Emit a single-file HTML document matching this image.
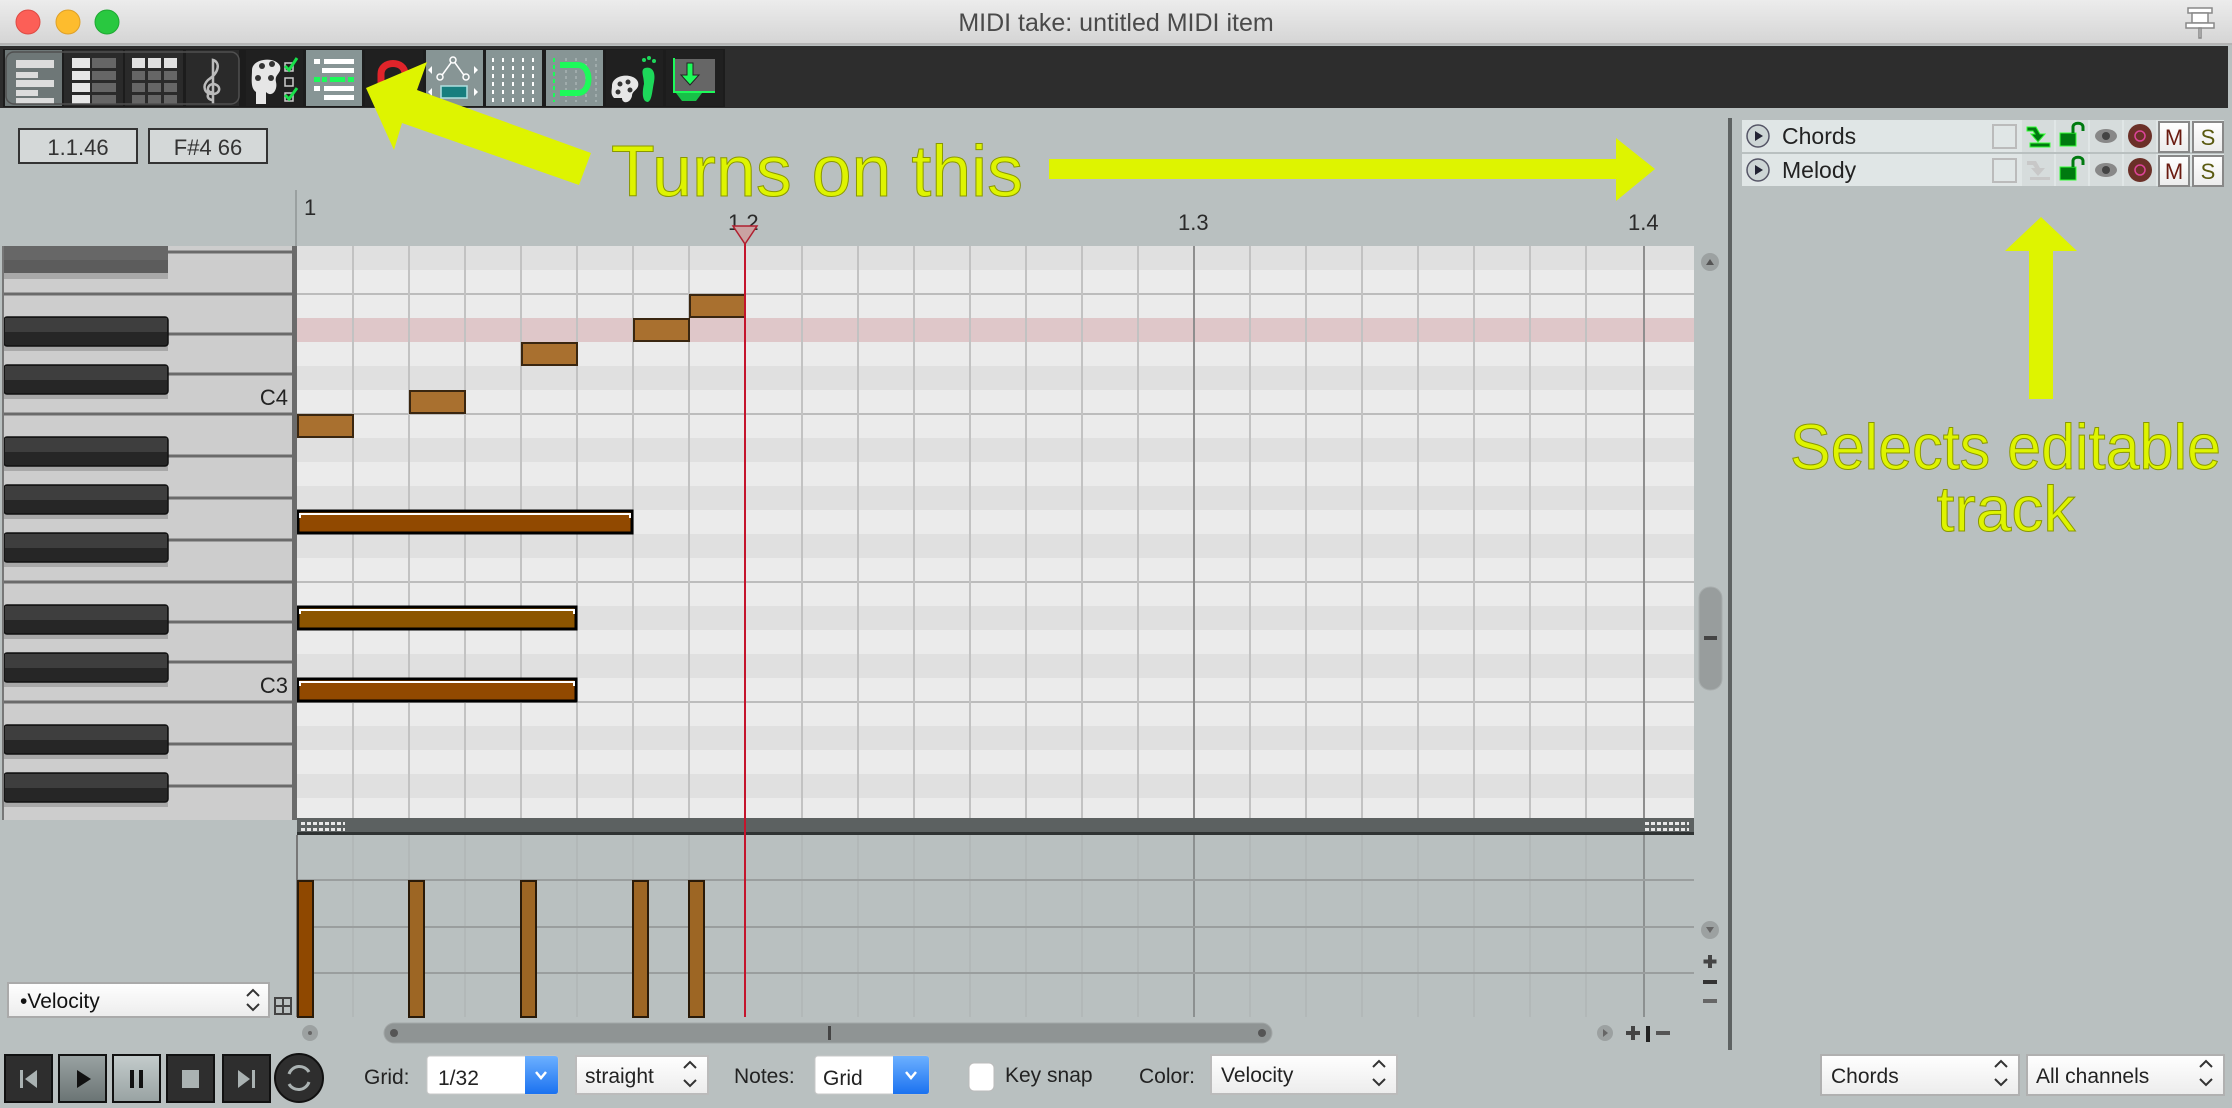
<!DOCTYPE html>
<html><head><meta charset="utf-8"><style>
html,body{margin:0;padding:0;background:#b9c0c0;}
svg{display:block;font-family:"Liberation Sans",Arial,sans-serif;}
</style></head><body>
<svg width="2232" height="1108" viewBox="0 0 2232 1108" xmlns="http://www.w3.org/2000/svg">
<defs>
<linearGradient id="tb" x1="0" y1="0" x2="0" y2="1"><stop offset="0" stop-color="#ececec"/><stop offset="1" stop-color="#d4d4d4"/></linearGradient>
<linearGradient id="sel" x1="0" y1="0" x2="0" y2="1"><stop offset="0" stop-color="#ffffff"/><stop offset="1" stop-color="#ececec"/></linearGradient>
<linearGradient id="blu" x1="0" y1="0" x2="0" y2="1"><stop offset="0" stop-color="#6cb0ff"/><stop offset="1" stop-color="#1b72f0"/></linearGradient>
<linearGradient id="play" x1="0" y1="0" x2="0" y2="1"><stop offset="0" stop-color="#9aa3a3"/><stop offset="1" stop-color="#6a7474"/></linearGradient>
<linearGradient id="paus" x1="0" y1="0" x2="0" y2="1"><stop offset="0" stop-color="#c4cccc"/><stop offset="1" stop-color="#98a2a2"/></linearGradient>
</defs>
<rect width="2232" height="1108" fill="#b9c0c0"/>
<!-- title bar -->
<rect x="0" y="0" width="2232" height="45" fill="url(#tb)"/>
<rect x="0" y="43" width="2232" height="2" fill="#b4b4b4"/>
<circle cx="28" cy="22" r="12" fill="#fc5f57" stroke="#de4a43" stroke-width="1"/>
<circle cx="68" cy="22" r="12" fill="#fdbc2e" stroke="#dea028" stroke-width="1"/>
<circle cx="107" cy="22" r="12" fill="#29c840" stroke="#1ea832" stroke-width="1"/>
<text x="1116" y="31" font-size="25" fill="#4a4a4a" text-anchor="middle">MIDI take: untitled MIDI item</text>
<g fill="#fff" stroke="#888" stroke-width="1.5">
<rect x="2188" y="8" width="24" height="5"/><rect x="2192" y="13" width="16" height="10"/><rect x="2186" y="23" width="28" height="5"/><rect x="2199" y="28" width="2" height="10"/></g>
<!-- toolbar -->
<rect x="0" y="46" width="2228" height="62" fill="#2d2d2d"/>
<rect x="3" y="49" width="722" height="58" fill="#1c1c1c"/>
<!-- b1 -->
<rect x="5" y="50" width="57" height="56" fill="#6e7777"/>
<g fill="#dcdcdc"><rect x="16" y="60" width="38" height="8"/><rect x="16" y="72" width="22" height="6"/><rect x="16" y="80" width="38" height="7"/><rect x="16" y="90" width="22" height="6"/><rect x="16" y="98" width="38" height="6"/></g>
<!-- b2 -->
<rect x="64" y="50" width="59" height="56" fill="#2a2a2a"/>
<g fill="#e6e6e6"><rect x="72" y="58" width="18" height="10"/><rect x="72" y="71" width="18" height="9"/><rect x="72" y="83" width="18" height="9"/><rect x="72" y="95" width="18" height="9"/></g>
<g fill="#666"><rect x="92" y="58" width="24" height="10"/><rect x="92" y="71" width="24" height="9"/><rect x="92" y="83" width="24" height="9"/><rect x="92" y="95" width="24" height="9"/></g>
<!-- b3 -->
<rect x="125" y="50" width="58" height="56" fill="#2a2a2a"/>
<g fill="#e0e0e0"><rect x="132" y="58" width="13" height="10"/><rect x="148" y="58" width="13" height="10"/><rect x="164" y="58" width="13" height="10"/></g>
<g fill="#666"><rect x="132" y="71" width="13" height="9"/><rect x="148" y="71" width="13" height="9"/><rect x="164" y="71" width="13" height="9"/><rect x="132" y="83" width="13" height="9"/><rect x="148" y="83" width="13" height="9"/><rect x="164" y="83" width="13" height="9"/><rect x="132" y="95" width="13" height="9"/><rect x="148" y="95" width="13" height="9"/><rect x="164" y="95" width="13" height="9"/></g>
<!-- b4 clef -->
<rect x="186" y="50" width="53" height="56" fill="#2a2a2a"/>
<path d="M213 100 C206 100 206 92 213 92 M213 104 L213 60 C220 62 220 72 208 80 C202 86 204 94 213 94 C220 94 222 86 214 84 C208 84 206 90 210 92" fill="none" stroke="#bbb" stroke-width="2.5"/>
<rect x="6" y="52" width="233" height="52" rx="8" fill="none" stroke="#505050" stroke-width="1.5"/>
<!-- b5 palette -->
<rect x="246" y="50" width="57" height="56" fill="#202020"/>
<path d="M252 70 C252 58 276 56 280 66 C282 74 274 74 276 82 C278 90 272 98 266 92 L266 104 L256 104 L256 92 C250 88 252 78 252 70Z" fill="#e6e6e6"/>
<circle cx="262" cy="66" r="3" fill="#333"/><circle cx="272" cy="64" r="3" fill="#333"/><circle cx="258" cy="78" r="3" fill="#333"/><circle cx="271" cy="78" r="3" fill="#333"/>
<rect x="285" y="63" width="8" height="8" fill="none" stroke="#ccc" stroke-width="1.5"/><rect x="285" y="78" width="8" height="8" fill="none" stroke="#ccc" stroke-width="1.5"/><rect x="285" y="93" width="8" height="8" fill="none" stroke="#ccc" stroke-width="1.5"/>
<path d="M285 66 L289 70 L297 58 M285 95 L289 99 L297 88" fill="none" stroke="#18e04a" stroke-width="3"/>
<!-- b6 active -->
<rect x="306" y="50" width="56" height="56" fill="#879595"/>
<g fill="#fff"><rect x="314" y="59" width="6" height="5"/><rect x="324" y="59" width="30" height="5"/><rect x="322" y="68" width="32" height="5"/><rect x="314" y="86" width="6" height="5"/><rect x="324" y="86" width="30" height="5"/><rect x="324" y="95" width="30" height="5"/></g>
<g fill="#1dfa5a"><rect x="314" y="77" width="6" height="5"/><rect x="322" y="77" width="5" height="5"/><rect x="330" y="77" width="15" height="5"/><rect x="348" y="77" width="6" height="5"/></g>
<!-- b7 magnet red -->
<rect x="365" y="50" width="58" height="56" fill="#202020"/>
<path d="M381 92 L381 74 C381 60 405 60 405 74 L405 92" fill="none" stroke="#e0242a" stroke-width="7"/>
<!-- b8 -->
<rect x="426" y="50" width="57" height="56" fill="#879595"/>
<path d="M440 78 L453 60 L466 78" fill="none" stroke="#fff" stroke-width="1.5"/>
<circle cx="440" cy="77" r="3" fill="#879595" stroke="#fff" stroke-width="1.5"/><circle cx="453" cy="60" r="3" fill="#879595" stroke="#fff" stroke-width="1.5"/><circle cx="466" cy="77" r="3" fill="#879595" stroke="#fff" stroke-width="1.5"/>
<rect x="441" y="86" width="26" height="12" fill="#177e7e" stroke="#b0e0e0" stroke-width="1.5"/>
<path d="M432 66 L428 70 L432 74Z M474 66 L478 70 L474 74Z M432 88 L428 92 L432 96Z M474 88 L478 92 L474 96Z" fill="#fff"/>
<!-- b9 -->
<rect x="486" y="50" width="56" height="56" fill="#879595"/>
<g stroke="#fff" stroke-width="2" stroke-dasharray="4 4"><line x1="493" y1="58" x2="493" y2="102"/><line x1="503" y1="58" x2="503" y2="102"/><line x1="513" y1="58" x2="513" y2="102"/><line x1="523" y1="58" x2="523" y2="102"/><line x1="533" y1="58" x2="533" y2="102"/></g>
<!-- b10 -->
<rect x="546" y="50" width="57" height="56" fill="#879595"/>
<g stroke="#a8b4b4" stroke-width="1.5" stroke-dasharray="3 3"><line x1="566" y1="58" x2="566" y2="102"/><line x1="576" y1="58" x2="576" y2="102"/><line x1="586" y1="58" x2="586" y2="102"/><line x1="596" y1="58" x2="596" y2="102"/></g>
<line x1="554" y1="58" x2="554" y2="102" stroke="#1dfa5a" stroke-width="2" stroke-dasharray="4 3"/>
<path d="M560 65 L578 65 C592 65 592 93 578 93 L560 93" fill="none" stroke="#1dfa5a" stroke-width="6"/>
<!-- b11 -->
<rect x="606" y="50" width="57" height="56" fill="#202020"/>
<path d="M612 86 C612 74 634 72 638 82 C640 90 632 90 632 96 C630 104 622 104 622 98 L614 98 C610 94 612 90 612 86Z" fill="#e6e6e6"/>
<circle cx="620" cy="84" r="2.5" fill="#333"/><circle cx="628" cy="82" r="2.5" fill="#333"/><circle cx="618" cy="92" r="2.5" fill="#333"/><circle cx="630" cy="90" r="2.5" fill="#333"/>
<path d="M645 68 C652 66 656 72 654 82 C652 92 652 100 648 102 C642 102 642 92 644 84 C644 76 640 70 645 68Z" fill="#1dd85a"/>
<circle cx="644" cy="60" r="2" fill="#1dd85a"/><circle cx="649" cy="58" r="2" fill="#1dd85a"/><circle cx="654" cy="61" r="2" fill="#1dd85a"/>
<!-- b12 -->
<rect x="666" y="50" width="57" height="56" fill="#202020"/>
<rect x="675" y="59" width="40" height="32" fill="#666"/>
<path d="M674 58 L674 92 L715 92" fill="none" stroke="#1dfa5a" stroke-width="2"/>
<path d="M687 63 L693 63 L693 75 L699 75 L690 85 L681 75 L687 75Z" fill="#1dfa5a" stroke="#222" stroke-width="1"/>
<path d="M676 93 L702 93 L696 101 L682 101Z" fill="#18c048"/>
<!-- position boxes -->
<rect x="19" y="129" width="118" height="34" fill="#d4d8d8" stroke="#333" stroke-width="2"/>
<text x="78" y="155" font-size="22" fill="#333" text-anchor="middle">1.1.46</text>
<rect x="149" y="129" width="118" height="34" fill="#d4d8d8" stroke="#333" stroke-width="2"/>
<text x="208" y="155" font-size="22" fill="#333" text-anchor="middle">F#4  66</text>
<!-- ruler -->
<line x1="296" y1="190" x2="296" y2="246" stroke="#9aa0a0" stroke-width="2"/>
<g font-size="22" fill="#2a2a2a">
<text x="304" y="215">1</text><text x="728" y="230">1.2</text><text x="1178" y="230">1.3</text><text x="1628" y="230">1.4</text></g>
<!-- grid -->
<rect x="297" y="246" width="1397" height="572" fill="#ebebeb"/>
<g fill="#e0e0e0">
<rect x="297" y="246" width="1397" height="24"/><rect x="297" y="318" width="1397" height="24"/><rect x="297" y="366" width="1397" height="24"/><rect x="297" y="438" width="1397" height="24"/><rect x="297" y="486" width="1397" height="24"/><rect x="297" y="534" width="1397" height="24"/><rect x="297" y="606" width="1397" height="24"/><rect x="297" y="654" width="1397" height="24"/><rect x="297" y="726" width="1397" height="24"/><rect x="297" y="774" width="1397" height="24"/></g>
<rect x="297" y="318" width="1397" height="24" fill="#dfc7c9"/>
<g stroke="#bcbcbc" stroke-width="2"><line x1="297" y1="294" x2="1694" y2="294"/><line x1="297" y1="414" x2="1694" y2="414"/><line x1="297" y1="582" x2="1694" y2="582"/><line x1="297" y1="702" x2="1694" y2="702"/></g>
<g stroke="#c2c2c2" stroke-width="2">
<line x1="353" y1="246" x2="353" y2="818"/><line x1="409" y1="246" x2="409" y2="818"/><line x1="465" y1="246" x2="465" y2="818"/><line x1="521" y1="246" x2="521" y2="818"/><line x1="577" y1="246" x2="577" y2="818"/><line x1="633" y1="246" x2="633" y2="818"/><line x1="689" y1="246" x2="689" y2="818"/><line x1="802" y1="246" x2="802" y2="818"/><line x1="858" y1="246" x2="858" y2="818"/><line x1="914" y1="246" x2="914" y2="818"/><line x1="970" y1="246" x2="970" y2="818"/><line x1="1026" y1="246" x2="1026" y2="818"/><line x1="1082" y1="246" x2="1082" y2="818"/><line x1="1138" y1="246" x2="1138" y2="818"/><line x1="1250" y1="246" x2="1250" y2="818"/><line x1="1306" y1="246" x2="1306" y2="818"/><line x1="1362" y1="246" x2="1362" y2="818"/><line x1="1418" y1="246" x2="1418" y2="818"/><line x1="1474" y1="246" x2="1474" y2="818"/><line x1="1530" y1="246" x2="1530" y2="818"/><line x1="1586" y1="246" x2="1586" y2="818"/></g>
<g stroke="#8e8e8e" stroke-width="2"><line x1="1194" y1="246" x2="1194" y2="818"/><line x1="1644" y1="246" x2="1644" y2="818"/></g>
<!-- notes -->
<g stroke="#3a2610" stroke-width="2" fill="#a9702f">
<rect x="298" y="415" width="55" height="22"/><rect x="410" y="391" width="55" height="22"/><rect x="522" y="343" width="55" height="22"/><rect x="634" y="319" width="55" height="22"/><rect x="690" y="295" width="55" height="22"/></g>
<g stroke="#000" stroke-width="3">
<rect x="298" y="511" width="334" height="22" fill="#914900"/><rect x="298" y="607" width="278" height="22" fill="#8c5500"/><rect x="298" y="679" width="278" height="22" fill="#914900"/></g>
<g stroke="#fff" stroke-width="2" fill="none"><path d="M300 518 L300 514 L630 514 L630 518"/><path d="M300 614 L300 610 L574 610 L574 614"/><path d="M300 686 L300 682 L574 682 L574 686"/></g>
<!-- piano -->
<rect x="3" y="246" width="293" height="574" fill="#cdcdcd"/>
<g stroke="#6a6a6a" stroke-width="3">
<line x1="4" y1="252" x2="293" y2="252"/><line x1="4" y1="294" x2="293" y2="294"/><line x1="4" y1="334" x2="293" y2="334"/><line x1="4" y1="374" x2="293" y2="374"/><line x1="4" y1="414" x2="293" y2="414"/><line x1="4" y1="456" x2="293" y2="456"/><line x1="4" y1="498" x2="293" y2="498"/><line x1="4" y1="540" x2="293" y2="540"/><line x1="4" y1="582" x2="293" y2="582"/><line x1="4" y1="622" x2="293" y2="622"/><line x1="4" y1="662" x2="293" y2="662"/><line x1="4" y1="702" x2="293" y2="702"/><line x1="4" y1="744" x2="293" y2="744"/><line x1="4" y1="786" x2="293" y2="786"/></g>
<g>
<rect x="4" y="273" width="164" height="6" fill="#a8a8a8"/>
<rect x="4" y="246" width="164" height="27" fill="#5c5c5c"/><rect x="4" y="246" width="164" height="14" fill="#676767"/>
</g>
<g id="bk">
<rect x="4" y="345" width="164" height="6" fill="#a8a8a8"/><rect x="4" y="317" width="164" height="29" rx="3" fill="#262626" stroke="#111" stroke-width="1.5"/><rect x="5" y="318" width="162" height="14" fill="#3e3e3e"/>
</g>
<use href="#bk" y="48"/><use href="#bk" y="120"/><use href="#bk" y="168"/><use href="#bk" y="216"/><use href="#bk" y="288"/><use href="#bk" y="336"/><use href="#bk" y="408"/><use href="#bk" y="456"/>
<rect x="2" y="246" width="2" height="574" fill="#777"/>
<rect x="292" y="246" width="5" height="574" fill="#6b6b6b"/>
<text x="288" y="405" font-size="22" fill="#222" text-anchor="end">C4</text>
<text x="288" y="693" font-size="22" fill="#222" text-anchor="end">C3</text>
<!-- grid bottom bar -->
<rect x="297" y="818" width="1397" height="15" fill="#5c6161"/>
<rect x="297" y="832" width="1397" height="3" fill="#2f3333"/>
<g fill="#e8e8e8"><rect x="301" y="822" width="44" height="3"/><rect x="301" y="828" width="44" height="3"/><rect x="1645" y="822" width="44" height="3"/><rect x="1645" y="828" width="44" height="3"/></g>
<g stroke="#5c6161" stroke-width="2"><path d="M306 820 V832 M312 820 V832 M318 820 V832 M324 820 V832 M330 820 V832 M336 820 V832 M342 820 V832 M1650 820 V832 M1656 820 V832 M1662 820 V832 M1668 820 V832 M1674 820 V832 M1680 820 V832 M1686 820 V832"/></g>
<!-- velocity lane -->
<g stroke="#b0b5b5" stroke-width="1.5">
<line x1="353" y1="835" x2="353" y2="1017"/><line x1="409" y1="835" x2="409" y2="1017"/><line x1="465" y1="835" x2="465" y2="1017"/><line x1="521" y1="835" x2="521" y2="1017"/><line x1="577" y1="835" x2="577" y2="1017"/><line x1="633" y1="835" x2="633" y2="1017"/><line x1="689" y1="835" x2="689" y2="1017"/><line x1="802" y1="835" x2="802" y2="1017"/><line x1="858" y1="835" x2="858" y2="1017"/><line x1="914" y1="835" x2="914" y2="1017"/><line x1="970" y1="835" x2="970" y2="1017"/><line x1="1026" y1="835" x2="1026" y2="1017"/><line x1="1082" y1="835" x2="1082" y2="1017"/><line x1="1138" y1="835" x2="1138" y2="1017"/><line x1="1250" y1="835" x2="1250" y2="1017"/><line x1="1306" y1="835" x2="1306" y2="1017"/><line x1="1362" y1="835" x2="1362" y2="1017"/><line x1="1418" y1="835" x2="1418" y2="1017"/><line x1="1474" y1="835" x2="1474" y2="1017"/><line x1="1530" y1="835" x2="1530" y2="1017"/><line x1="1586" y1="835" x2="1586" y2="1017"/></g>
<g stroke="#8c9090" stroke-width="2"><line x1="1194" y1="835" x2="1194" y2="1017"/><line x1="1644" y1="835" x2="1644" y2="1017"/></g>
<g stroke="#9a9e9e" stroke-width="2"><line x1="297" y1="880" x2="1694" y2="880"/><line x1="297" y1="927" x2="1694" y2="927"/><line x1="297" y1="973" x2="1694" y2="973"/></g>
<line x1="297" y1="835" x2="297" y2="1017" stroke="#777" stroke-width="2"/>
<g stroke="#2a1a08" stroke-width="2">
<rect x="298" y="881" width="15" height="136" fill="#8f4800"/><rect x="409" y="881" width="15" height="136" fill="#9d6624"/><rect x="521" y="881" width="15" height="136" fill="#9d6624"/><rect x="633" y="881" width="15" height="136" fill="#9d6624"/><rect x="689" y="881" width="15" height="136" fill="#9d6624"/></g>
<!-- playhead -->
<line x1="745" y1="240" x2="745" y2="1017" stroke="#c4142c" stroke-width="2"/>
<path d="M733 226 L757 226 L745 244Z" fill="#caa2a2" stroke="#b02030" stroke-width="1.5"/>
<!-- vertical scroll -->
<circle cx="1710" cy="262" r="9" fill="#9ca1a1"/><path d="M1706 265 L1714 265 L1710 259Z" fill="#555"/>
<rect x="1699" y="587" width="23" height="103" rx="11" fill="#989d9d" stroke="#a8adad"/>
<rect x="1704" y="636" width="13" height="4" fill="#444"/>
<circle cx="1710" cy="930" r="9" fill="#9ca1a1"/><path d="M1706 927 L1714 927 L1710 933Z" fill="#666"/>
<path d="M1710 955 V968 M1703.5 961.5 H1716.5" stroke="#444" stroke-width="4"/>
<rect x="1703" y="980" width="14" height="4" fill="#333"/>
<rect x="1703" y="999" width="14" height="4" fill="#666"/>
<!-- h scroll -->
<circle cx="310" cy="1033" r="8" fill="#9ca1a1"/><circle cx="310" cy="1033" r="2" fill="#666"/>
<rect x="384" y="1023" width="888" height="20" rx="10" fill="#8f9494" stroke="#a2a7a7"/>
<circle cx="394" cy="1033" r="4" fill="#555"/><circle cx="1262" cy="1033" r="4" fill="#555"/>
<rect x="828" y="1026" width="3" height="14" fill="#444"/>
<circle cx="1605" cy="1033" r="8" fill="#9ca1a1"/><path d="M1603 1029 L1608 1033 L1603 1037Z" fill="#666"/>
<path d="M1633 1026 V1040 M1626 1033 H1640" stroke="#444" stroke-width="4"/>
<rect x="1646" y="1026" width="4" height="16" fill="#222"/>
<rect x="1656" y="1031" width="14" height="4" fill="#555"/>
<!-- velocity dropdown -->
<rect x="8" y="983" width="261" height="34" fill="url(#sel)" stroke="#aaa" stroke-width="2"/>
<text x="20" y="1008" font-size="21" fill="#111">•Velocity</text>
<path d="M247 996 L253 990 L259 996 M247 1004 L253 1010 L259 1004" fill="none" stroke="#333" stroke-width="2"/>
<rect x="275" y="998" width="16" height="16" fill="none" stroke="#444" stroke-width="2"/><path d="M283 998 V1014 M275 1006 H291" stroke="#444" stroke-width="2"/>
<!-- divider -->
<rect x="1728" y="118" width="4" height="932" fill="#5e6262"/>
<!-- track list -->
<g font-size="22" fill="#222">
<rect x="1742" y="120" width="482" height="32" fill="#e0e6e6"/>
<rect x="1742" y="154" width="482" height="32" fill="#e0e6e6"/>
<circle cx="1758" cy="136" r="11" fill="#cdd5d5" stroke="#556" stroke-width="1.5"/><path d="M1755 131 L1763 136 L1755 141Z" fill="#223"/>
<circle cx="1758" cy="170" r="11" fill="#cdd5d5" stroke="#556" stroke-width="1.5"/><path d="M1755 165 L1763 170 L1755 175Z" fill="#223"/>
<text x="1782" y="144" font-size="23">Chords</text>
<text x="1782" y="178" font-size="23">Melody</text>
<rect x="1993" y="125" width="23" height="23" fill="none" stroke="#bbb" stroke-width="2"/>
<rect x="1993" y="159" width="23" height="23" fill="none" stroke="#bbb" stroke-width="2"/>
<rect x="2022" y="120" width="32" height="32" fill="#d6dcdc"/><rect x="2022" y="154" width="32" height="32" fill="#d6dcdc"/>
<path d="M2027 127 L2036 127 L2040 134 L2045 134 L2038 142 L2031 134 L2035 134 L2033 131 L2027 131Z" fill="#007a10" stroke="#3f3" stroke-width="1"/><rect x="2030" y="143" width="20" height="4" fill="#007a10" stroke="#3f3"/>
<path d="M2027 161 L2036 161 L2040 168 L2045 168 L2038 176 L2031 168 L2035 168 L2033 165 L2027 165Z" fill="#c8c8c8"/><rect x="2030" y="177" width="20" height="3" fill="#c8c8c8"/>
<rect x="2056" y="120" width="32" height="32" fill="#d6dcdc"/><rect x="2056" y="154" width="32" height="32" fill="#d6dcdc"/>
<g fill="#007a10" stroke="#3f3" stroke-width="1"><rect x="2060" y="133" width="16" height="13"/><rect x="2060" y="167" width="16" height="13"/></g>
<path d="M2073 133 V127 C2073 122 2083 122 2083 127 V131 M2073 167 V161 C2073 156 2083 156 2083 161 V165" fill="none" stroke="#007a10" stroke-width="3"/>
<rect x="2090" y="120" width="32" height="32" fill="#d6dcdc"/><rect x="2090" y="154" width="32" height="32" fill="#d6dcdc"/>
<ellipse cx="2106" cy="136" rx="11" ry="7" fill="#888"/><circle cx="2106" cy="136" r="4" fill="#444"/>
<ellipse cx="2106" cy="170" rx="11" ry="7" fill="#888"/><circle cx="2106" cy="170" r="4" fill="#444"/>
<rect x="2124" y="120" width="32" height="32" fill="#d6dcdc"/><rect x="2124" y="154" width="32" height="32" fill="#d6dcdc"/>
<circle cx="2140" cy="136" r="12" fill="#6b3028"/><circle cx="2140" cy="136" r="5" fill="none" stroke="#d49" stroke-width="1.5"/>
<circle cx="2140" cy="170" r="12" fill="#6b3028"/><circle cx="2140" cy="170" r="5" fill="none" stroke="#d49" stroke-width="1.5"/>
<g fill="url(#sel)" stroke="#888" stroke-width="2"><rect x="2159" y="122" width="30" height="30"/><rect x="2193" y="122" width="30" height="30"/><rect x="2159" y="156" width="30" height="30"/><rect x="2193" y="156" width="30" height="30"/></g>
<text x="2174" y="145" text-anchor="middle" fill="#6a1a10">M</text><text x="2208" y="145" text-anchor="middle" fill="#5a5a10">S</text>
<text x="2174" y="179" text-anchor="middle" fill="#6a1a10">M</text><text x="2208" y="179" text-anchor="middle" fill="#5a5a10">S</text>
</g>
<!-- transport -->
<g stroke="#111" stroke-width="2">
<rect x="5" y="1055" width="47" height="47" fill="#2e2e2e"/><rect x="59" y="1055" width="47" height="47" fill="url(#play)"/><rect x="113" y="1055" width="47" height="47" fill="url(#paus)"/><rect x="167" y="1055" width="47" height="47" fill="#2e2e2e"/><rect x="223" y="1055" width="47" height="47" fill="#2e2e2e"/></g>
<rect x="20" y="1070" width="3" height="18" fill="#aab2b2"/><path d="M37 1070 L37 1088 L25 1079Z" fill="#aab2b2"/>
<path d="M77 1070 L77 1088 L91 1079Z" fill="#111"/>
<rect x="130" y="1070" width="4" height="18" fill="#111"/><rect x="139" y="1070" width="4" height="18" fill="#111"/>
<rect x="182" y="1070" width="17" height="18" fill="#aab2b2"/>
<path d="M238 1070 L238 1088 L250 1079Z" fill="#aab2b2"/><rect x="252" y="1070" width="3" height="18" fill="#aab2b2"/>
<circle cx="299" cy="1078" r="24" fill="#2e2e2e" stroke="#111" stroke-width="2"/>
<path d="M289 1074 A11 11 0 0 1 309 1072 M309 1082 A11 11 0 0 1 289 1084" fill="none" stroke="#aab2b2" stroke-width="3"/>
<!-- bottom controls -->
<g font-size="21" fill="#222">
<text x="364" y="1084">Grid:</text>
<rect x="427" y="1056" width="131" height="38" rx="3" fill="#fff" stroke="#c8c8c8"/>
<path d="M525 1056 H555 Q558 1056 558 1059 V1091 Q558 1094 555 1094 H525Z" fill="url(#blu)"/>
<path d="M536 1072 L541 1078 L546 1072" fill="none" stroke="#fff" stroke-width="2.5"/>
<text x="438" y="1085">1/32</text>
<rect x="576" y="1056" width="132" height="38" fill="url(#sel)" stroke="#bbb" stroke-width="2"/>
<text x="585" y="1083">straight</text>
<path d="M684 1068 L690 1062 L696 1068 M684 1080 L690 1086 L696 1080" fill="none" stroke="#333" stroke-width="2"/>
<text x="734" y="1083">Notes:</text>
<rect x="815" y="1056" width="114" height="38" rx="3" fill="#fff" stroke="#c8c8c8"/>
<path d="M893 1056 H926 Q929 1056 929 1059 V1091 Q929 1094 926 1094 H893Z" fill="url(#blu)"/>
<path d="M906 1072 L911 1078 L916 1072" fill="none" stroke="#fff" stroke-width="2.5"/>
<text x="823" y="1085">Grid</text>
<rect x="969" y="1063" width="25" height="28" rx="5" fill="#fff" stroke="#bbb"/>
<text x="1005" y="1082">Key snap</text>
<text x="1139" y="1083">Color:</text>
<rect x="1211" y="1055" width="186" height="39" fill="url(#sel)" stroke="#bbb" stroke-width="2"/>
<text x="1221" y="1082">Velocity</text>
<path d="M1373 1067 L1379 1061 L1385 1067 M1373 1079 L1379 1085 L1385 1079" fill="none" stroke="#333" stroke-width="2"/>
<rect x="1821" y="1055" width="198" height="40" fill="url(#sel)" stroke="#b0b0b0" stroke-width="2"/>
<text x="1831" y="1083">Chords</text>
<path d="M1995 1067 L2001 1061 L2007 1067 M1995 1079 L2001 1085 L2007 1079" fill="none" stroke="#333" stroke-width="2"/>
<rect x="2027" y="1055" width="197" height="40" fill="url(#sel)" stroke="#b0b0b0" stroke-width="2"/>
<text x="2036" y="1083">All channels</text>
<path d="M2200 1067 L2206 1061 L2212 1067 M2200 1079 L2206 1085 L2212 1079" fill="none" stroke="#333" stroke-width="2"/>
</g>
<!-- annotations -->
<g fill="#def400">
<path d="M366 88 L427 62 L417 90 L591 153 L579 185 L402 123 L394 150Z"/>
<rect x="1049" y="159" width="568" height="20"/>
<path d="M1616 138 L1655 169 L1616 201Z"/>
<path d="M2041 217 L2077 251 L2053 251 L2053 399 L2029 399 L2029 251 L2005 251Z"/>
</g>
<g font-size="72" fill="#def400">
<text x="611" y="196" textLength="412" lengthAdjust="spacingAndGlyphs" stroke="#8a9800" stroke-width="1">Turns on this</text>
<text x="1790" y="469" font-size="64" textLength="431" lengthAdjust="spacingAndGlyphs" stroke="#8a9800" stroke-width="1">Selects editable</text>
<text x="2006" y="531" font-size="64" text-anchor="middle" stroke="#8a9800" stroke-width="1">track</text>
</g>
</svg>
</body></html>
